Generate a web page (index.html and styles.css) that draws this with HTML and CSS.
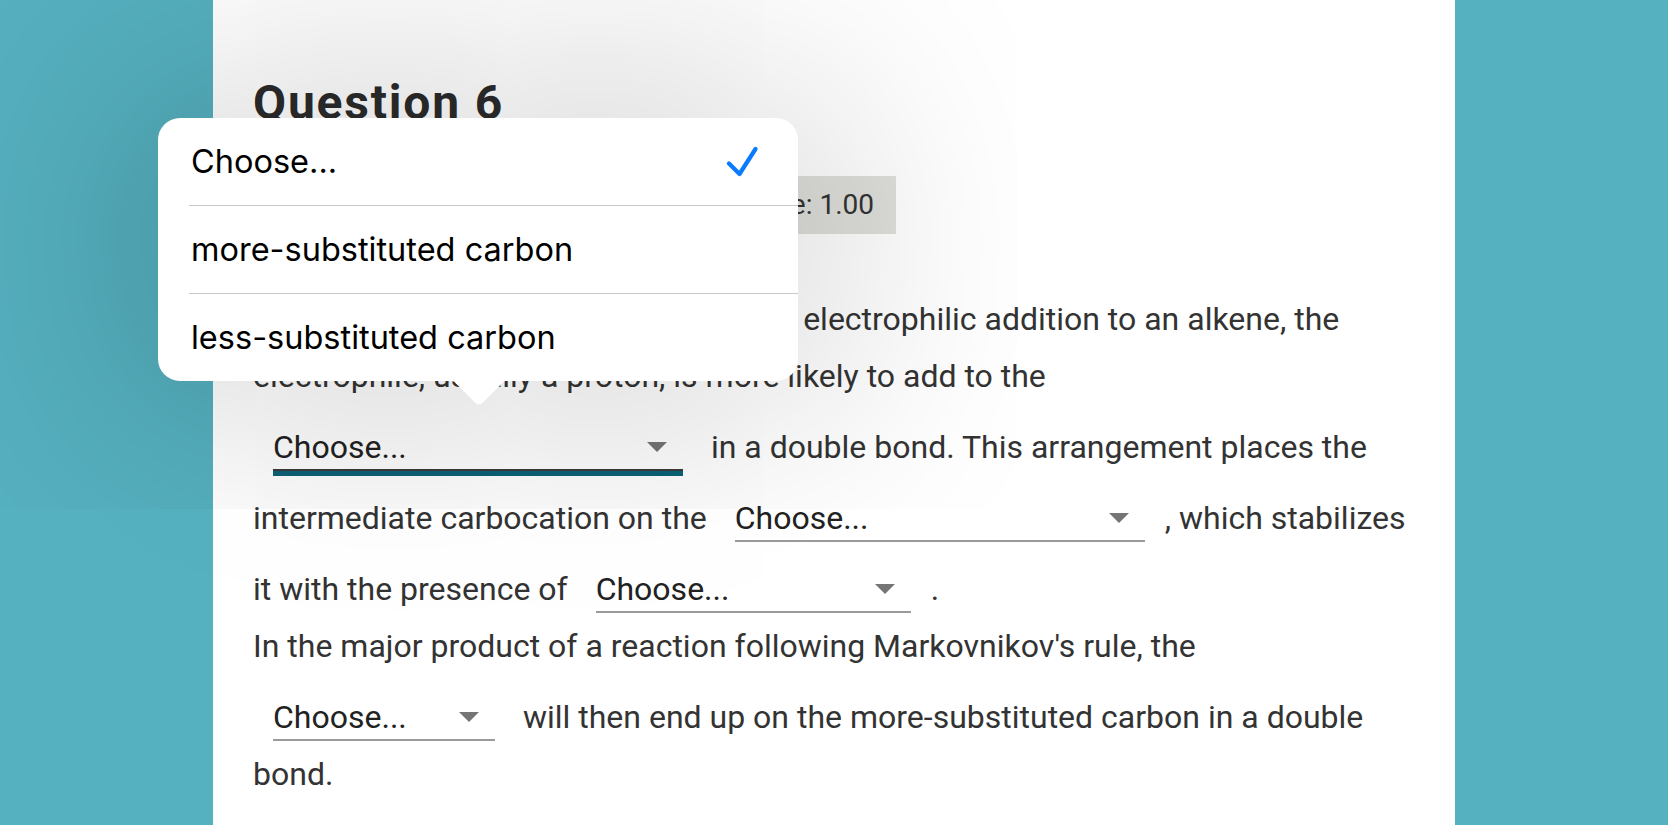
FILE: index.html
```html
<!DOCTYPE html>
<html lang="en">
<head>
    <meta charset="UTF-8">
    <meta name="viewport" content="width=device-width, initial-scale=1.0">
    <title>Question 6</title>
    <link rel="stylesheet" href="styles.css">
</head>
<body>

<div class="page">
    <main class="card">
        <h2 class="q-title">Question 6</h2>
        <div class="q-info">
            <span>Not yet answered</span>
            <span>Max. grade: 1.00</span>
        </div>
        <p class="q-text">
            Markovnikov's rule suggests that in an electrophilic addition to an alkene, the
            electrophile, usually a proton, is more likely to add to the
            <span class="select select-lg is-focused">Choose...</span> in a double bond. This arrangement places the
            intermediate carbocation on the <span class="select select-lg">Choose...</span>, which stabilizes
            it with the presence of <span class="select select-md">Choose...</span>.<br>
            In the major product of a reaction following Markovnikov's rule, the
            <span class="select select-sm">Choose...</span> will then end up on the more-substituted carbon in a double
            bond.
        </p>
    </main>
</div>

<!-- open picker for the first select -->
<div class="popover">
    <div class="option">
        <span>Choose...</span>
        <svg class="check" width="32" height="31" viewBox="0 0 32 31">
            <path d="M3 17.5 L13.5 28 L29.5 3" fill="none" stroke="#0a7aff" stroke-width="4.2" stroke-linecap="round" stroke-linejoin="round"/>
        </svg>
    </div>
    <div class="option">more-substituted carbon</div>
    <div class="option">less-substituted carbon</div>
</div>

</body>
</html>
```

FILE: styles.css
```css
html, body {
    margin: 0;
    height: 100%;
}
body {
    background-color: #55b0bf;
    font-family: Roboto, "Liberation Sans", sans-serif;
    color: #333;
    overflow: hidden;
}
.page {
    display: flex;
    justify-content: center;
    height: 100vh;
}
.card {
    width: 1242px;
    box-sizing: border-box;
    padding: 74px 40px 0;
    background-color: #fff;
}
.q-title {
    margin: 0;
    font-size: 48px;
    line-height: 1.2;
    font-weight: 700;
    letter-spacing: 1.8px;
    color: #2b2b2b;
}
.q-info {
    display: flex;
    justify-content: space-between;
    width: 643px;
    box-sizing: border-box;
    margin-top: 44px;
    padding: 12px 22px;
    background-color: #dfe0db;
    font-size: 28px;
    line-height: 34px;
}
.q-text {
    margin: 57px 0 0;
    font-size: 32px;
    line-height: 57px;
}
.select {
    display: inline-block;
    position: relative;
    box-sizing: border-box;
    margin: 20px 20px 0;
    line-height: 44px;
    border-bottom: 2px solid #9a9a9a;
    color: #222;
}
.select::after {
    content: "";
    position: absolute;
    top: 17px;
    right: 16px;
    border-left: 10px solid transparent;
    border-right: 10px solid transparent;
    border-top: 10px solid #757575;
}
.select.is-focused {
    border-bottom-color: #3c3c3c;
    box-shadow: 0 5px 0 #0b6378;
}
.select-lg { width: 410px; }
.select-md { width: 315px; }
.select-sm { width: 222px; }

/* iOS style picker popover */
.popover {
    position: absolute;
    left: 158px;
    top: 118px;
    width: 640px;
    background-color: #fff;
    border-radius: 22px;
    box-shadow: 0 0 250px 20px rgba(0, 0, 0, 0.23);
    font-family: Inter, "Noto Sans", sans-serif;
    font-size: 32.5px;
    color: #000;
}
.popover::after {
    content: "";
    position: absolute;
    left: 303px;
    top: 245px;
    width: 36px;
    height: 36px;
    background-color: #fff;
    border-bottom-right-radius: 5px;
    transform: rotate(45deg);
}
.option {
    display: flex;
    align-items: center;
    justify-content: space-between;
    height: 87px;
    margin-left: 31px;
    padding: 0 40px 0 2px;
}
.option + .option {
    border-top: 1px solid #c8c8c8;
}
.check {
    display: block;
}
```
